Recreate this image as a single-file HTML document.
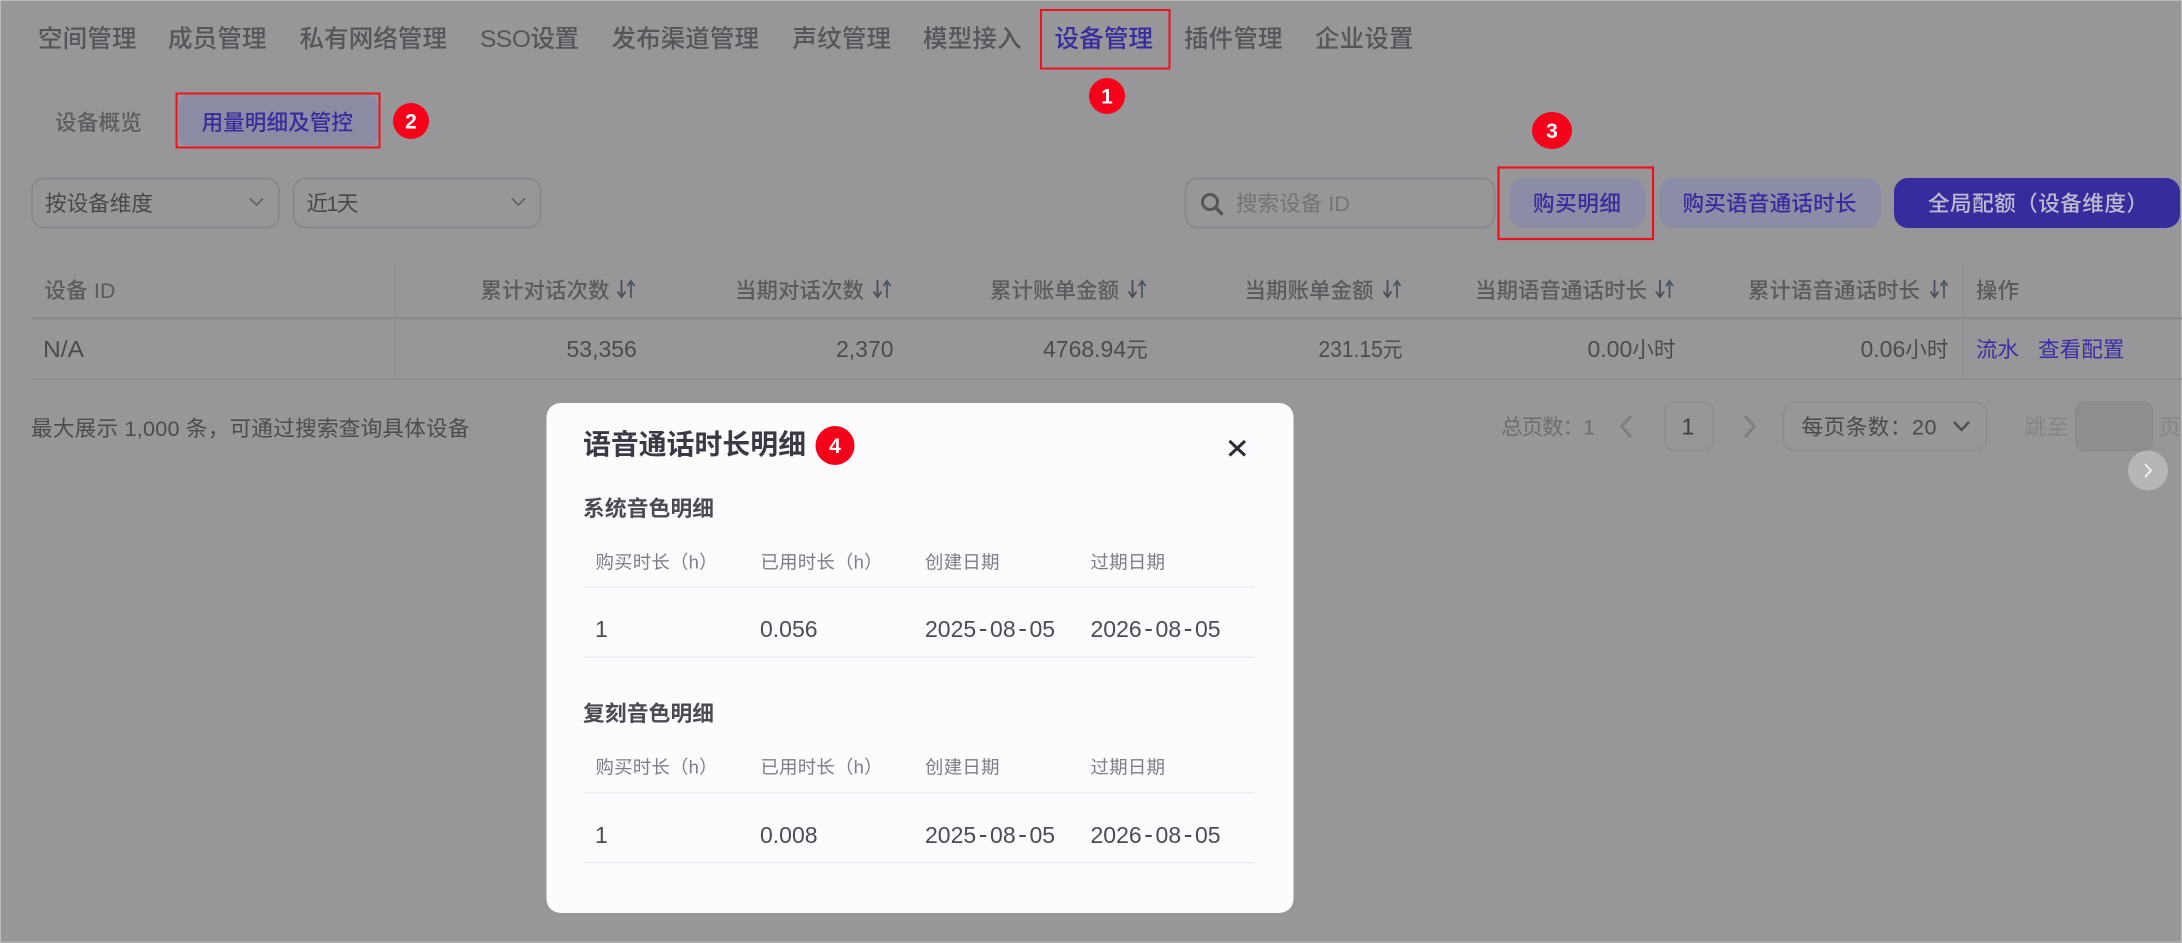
<!DOCTYPE html>
<html lang="zh">
<head>
<meta charset="utf-8">
<title>设备管理</title>
<style>
html,body{margin:0;padding:0;width:2182px;height:943px;overflow:hidden;background:#979799}
svg{display:block;position:absolute;left:0;top:0;filter:blur(.35px)}
text{font-family:"Liberation Sans","Noto Sans CJK SC",sans-serif;white-space:pre}
.nav{font-size:24.5px;fill:#55555a;font-weight:500}
.b{font-size:21.6px;fill:#4c4c50}
.h{font-size:21.4px;fill:#5b5b5f;font-weight:500}
.n{font-size:23px}
.m{font-weight:500}
.sec{font-size:21.7px;font-weight:700;fill:#4a4a52}
.mh{font-size:18.4px;fill:#7d7d86}
.mr{font-size:23px;fill:#4b4b53}
.d{font-size:26px}
.badge{font-size:21px;font-weight:700;fill:#fff;text-anchor:middle}
</style>
</head>
<body>
<svg width="2182" height="943" viewBox="0 0 2182 943" xmlns="http://www.w3.org/2000/svg">
<defs>
<g id="sort" fill="none" stroke="#4b4d5a" stroke-width="1.8">
<path d="M4.500 0V16M0.500 11.500L4.500 17L8.500 11.500" />
<path d="M14 18V1M10.500 6L14 1L17.500 6" stroke="#4d5560"/>
</g>
</defs>
<rect width="2182" height="943" fill="#979799"/>
<rect x="0.500" y="0.500" width="2181" height="941.500" fill="none" stroke="#bcbcbc" stroke-width="1"/>

<!-- top navigation -->
<text class="nav" x="38" y="47" textLength="98.500">空间管理</text>
<text class="nav" x="168" y="47" textLength="98.500">成员管理</text>
<text class="nav" x="299.500" y="47" textLength="147.500">私有网络管理</text>
<text class="nav" x="480" y="47" textLength="99">SSO设置</text>
<text class="nav" x="611.500" y="47" textLength="147.500">发布渠道管理</text>
<text class="nav" x="792.500" y="47" textLength="98.500">声纹管理</text>
<text class="nav" x="923" y="47" textLength="98.500">模型接入</text>
<text class="nav" x="1054.500" y="47" textLength="98.500" style="fill:#372c9e">设备管理</text>
<text class="nav" x="1184" y="47" textLength="98.500">插件管理</text>
<text class="nav" x="1315" y="47" textLength="98.500">企业设置</text>
<rect x="1041" y="10" width="128.500" height="58.500" fill="none" stroke="#f20f1d" stroke-width="2"/>
<circle cx="1107" cy="96" r="18" fill="#f6001a"/>
<text class="badge" x="1107" y="103.500">1</text>

<!-- sub tabs -->
<text class="b m" x="55" y="129.800" textLength="87" style="fill:#5c5c60">设备概览</text>
<rect x="179" y="95" width="198" height="51" rx="8" fill="#8b8ca3"/>
<text class="b m" x="201.500" y="129.800" textLength="151.500" style="fill:#372c9e">用量明细及管控</text>
<rect x="176.500" y="93.500" width="203" height="54" fill="none" stroke="#f20f1d" stroke-width="2"/>
<circle cx="411" cy="121" r="18" fill="#f6001a"/>
<text class="badge" x="411" y="128.500">2</text>

<!-- filters -->
<rect x="32" y="178.500" width="247" height="49" rx="12" fill="none" stroke="#85858c" stroke-width="1.500"/>
<text class="b" x="45" y="210.800" textLength="108" style="fill:#48484c">按设备维度</text>
<path d="M250 198.500L256.500 205L263 198.500" fill="none" stroke="#5f5f64" stroke-width="1.600"/>
<rect x="293.500" y="178.500" width="247" height="49" rx="12" fill="none" stroke="#85858c" stroke-width="1.500"/>
<text class="b" x="306.500" y="210.800" textLength="52" style="fill:#48484c">近1天</text>
<path d="M512 198.500L518.500 205L525 198.500" fill="none" stroke="#5f5f64" stroke-width="1.600"/>

<rect x="1185.500" y="178.500" width="309" height="49" rx="12" fill="none" stroke="#85858c" stroke-width="1.500"/>
<circle cx="1210" cy="202" r="7.500" fill="none" stroke="#55555a" stroke-width="3"/>
<path d="M1215.500 207.500L1221.500 213.500" stroke="#55555a" stroke-width="3.500" stroke-linecap="round"/>
<text class="b" x="1236" y="210.800" textLength="114" style="fill:#737378">搜索设备 ID</text>

<!-- buttons -->
<rect x="1509.500" y="178" width="136" height="50" rx="14" fill="#8b8ca6"/>
<text class="b m" x="1533" y="210.800" textLength="88" style="fill:#372c9e">购买明细</text>
<rect x="1498.500" y="167.500" width="154.500" height="71.500" fill="none" stroke="#f20f1d" stroke-width="2.200"/>
<rect x="1659" y="178" width="222" height="50" rx="14" fill="#8b8ca6"/>
<text class="b m" x="1682.500" y="210.800" textLength="174" style="fill:#372c9e">购买语音通话时长</text>
<rect x="1894" y="178" width="286" height="50" rx="14" fill="#372c9e"/>
<text class="b m" x="1928" y="210.800" textLength="220" style="fill:#bcbccf">全局配额（设备维度）</text>
<ellipse cx="1552" cy="130.500" rx="20" ry="18.500" fill="#f6001a"/>
<text class="badge" x="1552" y="138">3</text>

<!-- table -->
<rect x="32" y="317" width="2150" height="2.500" fill="#8c8c8f"/>
<rect x="32" y="378.500" width="2150" height="1.500" fill="#8e8e91"/>
<rect x="394.500" y="263" width="1" height="116" fill="#8f8f92"/>
<rect x="1962.500" y="263" width="1" height="116" fill="#8f8f92"/>

<text class="h" x="44.500" y="298" textLength="71">设备 ID</text>
<text class="h" x="480.500" y="298" textLength="129">累计对话次数</text>
<use href="#sort" x="617" y="280"/>
<text class="h" x="735" y="298" textLength="129">当期对话次数</text>
<use href="#sort" x="873" y="280"/>
<text class="h" x="990" y="298" textLength="129">累计账单金额</text>
<use href="#sort" x="1128" y="280"/>
<text class="h" x="1244.500" y="298" textLength="129">当期账单金额</text>
<use href="#sort" x="1383" y="280"/>
<text class="h" x="1475" y="298" textLength="172">当期语音通话时长</text>
<use href="#sort" x="1655.500" y="280"/>
<text class="h" x="1748" y="298" textLength="172">累计语音通话时长</text>
<use href="#sort" x="1930" y="280"/>
<text class="h" x="1976" y="298" textLength="43">操作</text>

<text class="b n" x="43" y="357" textLength="41" lengthAdjust="spacingAndGlyphs">N/A</text>
<text class="b n" x="566.500" y="357">53,356</text>
<text class="b n" x="836" y="357">2,370</text>
<text class="b" x="1043" y="357"><tspan class="n">4768.94</tspan>元</text>
<text class="b" x="1318.500" y="357" textLength="84" lengthAdjust="spacingAndGlyphs"><tspan class="n">231.15</tspan>元</text>
<text class="b" x="1587.500" y="357"><tspan class="n">0.00</tspan>小时</text>
<text class="b" x="1860.500" y="357"><tspan class="n">0.06</tspan>小时</text>
<text class="b" x="1976" y="357" textLength="43" style="fill:#3a2ea6">流水</text>
<text class="b" x="2038" y="357" textLength="86.500" style="fill:#3a2ea6">查看配置</text>

<!-- footer -->
<text class="b" x="31" y="435.800" textLength="438.500">最大展示 1,000 条，可通过搜索查询具体设备</text>

<!-- pagination -->
<text class="b" x="1501" y="434.500" textLength="94" style="fill:#6e6e71">总页数：1</text>
<path d="M1631 416L1621.500 426.500L1631 437" fill="none" stroke="#7e7e81" stroke-width="2.800"/>
<rect x="1665" y="402" width="48.500" height="48.500" rx="9" fill="none" stroke="#8d8d90" stroke-width="1.500"/>
<text class="b n m" x="1681.500" y="434.500" style="fill:#414145">1</text>
<path d="M1745 416L1754.500 426.500L1745 437" fill="none" stroke="#7e7e81" stroke-width="2.800"/>
<rect x="1783.500" y="402" width="203" height="48.500" rx="11" fill="none" stroke="#8d8d90" stroke-width="1.500"/>
<text class="b" x="1801.500" y="434.500" textLength="135" style="fill:#4a4a4e">每页条数：20</text>
<path d="M1954 422L1961.500 430L1969 422" fill="none" stroke="#4f4f53" stroke-width="2.400"/>
<text class="b" x="2024.500" y="434.500" textLength="44" style="fill:#848486">跳至</text>
<rect x="2075.500" y="402" width="77" height="48.500" rx="9" fill="#8e8e90" stroke="#8a8a8c" stroke-width="1.500"/>
<text class="b" x="2159" y="434.500" textLength="22" style="fill:#848486">页</text>
<circle cx="2148" cy="470.500" r="20" fill="#b6b6b9"/>
<path d="M2145 464L2151 470.500L2145 477" fill="none" stroke="#fff" stroke-width="1.500"/>

<!-- modal -->
<rect x="546.500" y="403" width="747" height="510" rx="14" fill="#fcfcfe"/>
<text x="583" y="454" textLength="223" style="font-size:27.800px;font-weight:700;fill:#3a3a44">语音通话时长明细</text>
<circle cx="835" cy="445.500" r="19.500" fill="#f6001a"/>
<text class="badge" x="835" y="453">4</text>
<path d="M1229.500 441L1245 455.500M1245 441L1229.500 455.500" fill="none" stroke="#2c2c36" stroke-width="3"/>

<text class="sec" x="583" y="515.800" textLength="131">系统音色明细</text>
<text class="mh" x="595.500" y="568.300" textLength="122">购买时长（h）</text>
<text class="mh" x="760.500" y="568.300" textLength="122">已用时长（h）</text>
<text class="mh" x="925" y="568.300" textLength="74.500">创建日期</text>
<text class="mh" x="1090.500" y="568.300" textLength="74.500">过期日期</text>
<rect x="584" y="586.500" width="671" height="1.200" fill="#e9e9f2"/>
<text class="mr" x="595" y="636.800">1</text>
<text class="mr" x="760" y="636.800">0.056</text>
<text class="mr" x="925" y="636.800">2025<tspan class="d" dx="2.600">-</tspan><tspan dx="2.600">08</tspan><tspan class="d" dx="2.600">-</tspan><tspan dx="2.600">05</tspan></text>
<text class="mr" x="1090.500" y="636.800">2026<tspan class="d" dx="2.600">-</tspan><tspan dx="2.600">08</tspan><tspan class="d" dx="2.600">-</tspan><tspan dx="2.600">05</tspan></text>
<rect x="584" y="656.500" width="671" height="1.200" fill="#e9e9f2"/>

<text class="sec" x="583" y="720.800" textLength="131">复刻音色明细</text>
<text class="mh" x="595.500" y="773.600" textLength="122">购买时长（h）</text>
<text class="mh" x="760.500" y="773.600" textLength="122">已用时长（h）</text>
<text class="mh" x="925" y="773.600" textLength="74.500">创建日期</text>
<text class="mh" x="1090.500" y="773.600" textLength="74.500">过期日期</text>
<rect x="584" y="792" width="671" height="1.400" fill="#ecedf6"/>
<text class="mr" x="595" y="842.800">1</text>
<text class="mr" x="760" y="842.800">0.008</text>
<text class="mr" x="925" y="842.800">2025<tspan class="d" dx="2.600">-</tspan><tspan dx="2.600">08</tspan><tspan class="d" dx="2.600">-</tspan><tspan dx="2.600">05</tspan></text>
<text class="mr" x="1090.500" y="842.800">2026<tspan class="d" dx="2.600">-</tspan><tspan dx="2.600">08</tspan><tspan class="d" dx="2.600">-</tspan><tspan dx="2.600">05</tspan></text>
<rect x="584" y="862" width="671" height="1.200" fill="#e9e9f2"/>
</svg>
</body>
</html>
